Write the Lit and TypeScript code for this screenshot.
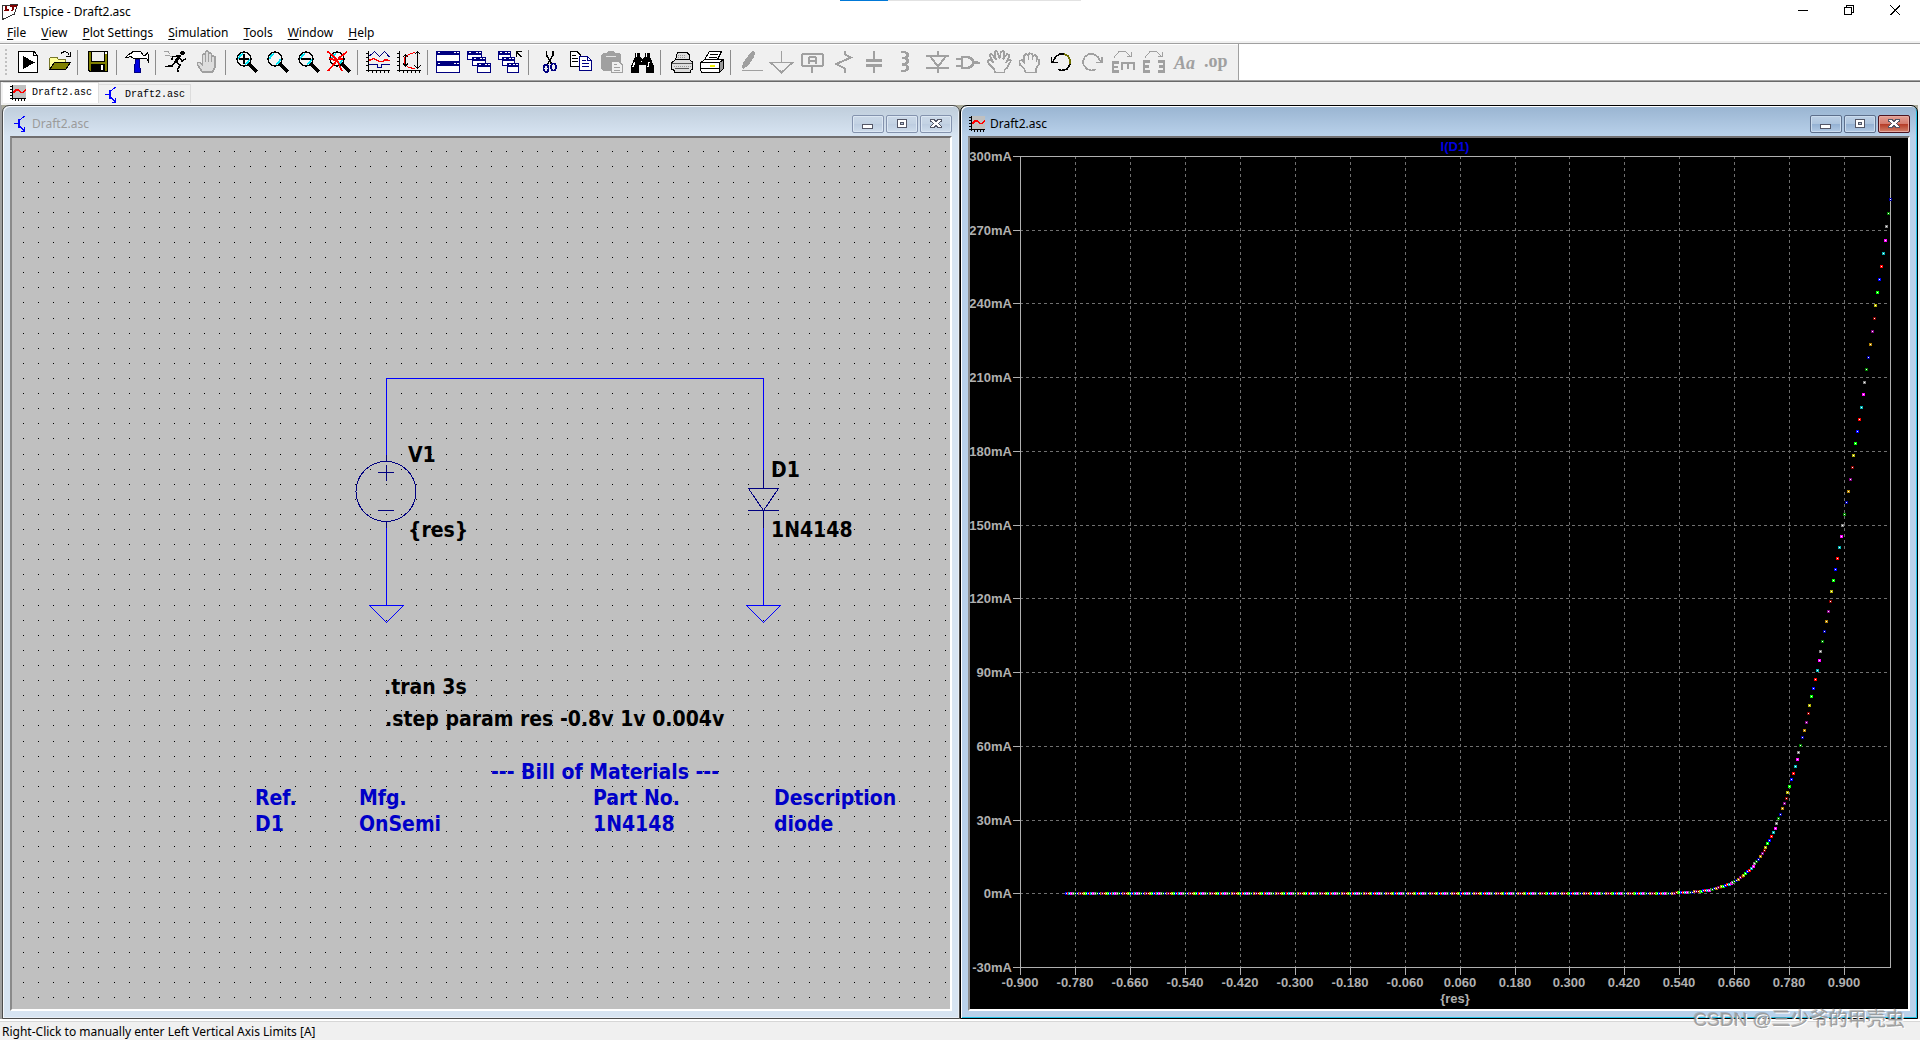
import { LitElement, html, css, svg, nothing } from "lit";
import type { TemplateResult } from "lit";
import { customElement, property, state } from "lit/decorators.js";
import { classMap } from "lit/directives/class-map.js";

const G = "#a0a0a0";
const NAVY = "#000080";

const lens = svg`
  <circle cx="10" cy="9" r="7" fill="#f4f4f4" stroke="#000" stroke-width="1.4"/>
  <path d="M5 9C5 6 7 4.5 9 4M11 14C13 13.500 15 12 15 9" fill="none" stroke="#00e5f5" stroke-width="1.6"/>
  <path d="M15 14L23 22" stroke="#000" stroke-width="3.2" fill="none"/>`;

const axes = svg`
  <path d="M2.500 1V22M0 20.500H24M0 3.500H2M0 7.500H2M0 11.500H2M0 15.500H2M6.500 21V23M10.500 21V23M14.500 21V23M18.500 21V23M22.500 21V23" stroke="#000" fill="none"/>`;

const win = (x: number, y: number, w: number, h: number) => svg`
  <rect x=${x + 0.5} y=${y + 0.5} width=${w - 1} height=${h - 1} fill="#fff" stroke=${NAVY}/>
  <rect x=${x} y=${y} width=${w} height="4" fill=${NAVY}/>
  <path d="M${x + 2} ${y + 1.5}h2M${x + w - 6} ${y + 1.5}h2M${x + w - 3} ${y + 1.5}h2" stroke="#fff"/>`;

const ICONS: Record<string, TemplateResult> = {
  run: svg`<path d="M2.500 1.500H18L21.500 5.500V22.500H2.500Z" fill="#fff" stroke="#000"/><path d="M17.500 1.500V5.500H21.500" fill="none" stroke="#000"/><path d="M7 6L19 12.500L7 19Z"/>`,
  open: svg`<path d="M2.500 19V8.500L4 7H9.500L11 9H18V12" fill="#ffff9a" stroke="#77772a"/><path d="M2.500 19.500L7.500 12.500H23.500L18.500 19.500Z" fill="#808000" stroke="#000"/><path d="M13.500 4.500L15 2.500L18 1.500L20.500 2.500L22.500 5.500M23.500 2V6.500H19" fill="none" stroke="#000"/>`,
  save: svg`<path d="M2.500 1.500H21.500V21.500H4L2.500 20Z" fill="#808000" stroke="#000"/><rect x="5" y="1" width="14" height="11"/><rect x="6" y="2" width="12" height="9" fill="#f0f0f0"/><rect x="5" y="14" width="14" height="8"/><rect x="15" y="15" width="2" height="5" fill="#fff"/><rect x="19" y="2" width="2" height="2" fill="#fff"/>`,
  hammer: svg`<path d="M.5 7.500L3.500 4.500L7.500 2.500V1.500H15.500L18 5L20.500 5L22.500 3L23.500 5V12.500L22 9L16.500 8.500H8.500L6 6.500L1 8Z" fill="#fff" stroke="#000"/><path d="M10 9.500H14.500L14.500 14L15.500 22.500H9.500L10 14Z" fill="#0000e0" stroke=${NAVY}/>`,
  runner: svg`<circle cx="18.500" cy="3" r="2.400"/><path d="M16 5L11 13" stroke="#000" stroke-width="3" fill="none"/><path d="M15 6L9 6.500L7.500 10.500M15.500 8L18 11L22 8.500M11 12.500L8 16L1 16.500M11.500 12L16.500 15L13.500 19L14.500 22.500" stroke="#000" stroke-width="1.500" fill="none"/><path d="M0 1.500L4 1.500L6 4M1 5.500H5.500L7.500 7" stroke="#a0a0a0" fill="none"/>`,
  halt: svg`<path d="M7.500 22L2.500 15L2.500 12.500L5 12.500L7.500 15V4.500L9 3.500L10.500 4.500V2L12 1L13.500 2V3L15 2.500L16.500 3.500V6L18 5.500L20 7V17L17.500 22Z" fill="#ddd" stroke=${G} stroke-width="1.600"/><path d="M10.500 4V12M13.500 3V12M16.500 5V12" stroke=${G} stroke-width="1.500"/>`,
  zoomin: svg`${lens}<path d="M5 9H15M10 4V14" stroke="#000" stroke-width="2"/>`,
  zoompan: lens,
  zoomout: svg`${lens}<path d="M5 9H15" stroke="#000" stroke-width="2"/>`,
  zoomfit: svg`${lens}<path d="M.5 1.500L6 6L10 10L15 21M20 2L13 7L7 14L1 21M2 8L7 10L16 9" stroke="#f00" stroke-width="1.800" fill="none"/>`,
  auto: svg`<path d="M3.500 6L8.500 1.500L13.500 6.500L18.500 1.500L23.500 7M3 14.500H11V17.500H15.500V14.500H24" fill="none" stroke=${NAVY}/><path d="M3 10.500L8 8.500L13 11.500H17L19 10L24 10.500" fill="none" stroke="#f00" stroke-width="1.500"/>${axes}`,
  autoy: svg`${axes}<path d="M18 2L11 5L7.500 8V13L11 17L18 19" fill="none" stroke="#f00"/><path d="M8.500 4.500V16M6 7L8.500 4.500L11 7M6 13.500L8.500 16L11 13.500M20.500 1.500V18.500M17.500 4.500L20.500 1.500L23.500 4.500M17.500 15.500L20.500 18.500L23.500 15.500" fill="none" stroke="#000"/>`,
  tile: svg`${win(0, 1, 24, 11)}${win(0, 12, 24, 11)}`,
  cascade: svg`${win(0, 1, 15, 9)}${win(5, 7, 14, 9)}${win(10, 13, 14, 10)}`,
  closeall: svg`${win(0, 1, 13, 9)}${win(4, 7, 13, 9)}${win(9, 13, 12, 10)}<path d="M18.500 7V1.500H24M18.500 1.500L23.500 7" fill="none" stroke="#000" stroke-width="1.400"/>`,
  cut: svg`<path d="M9.500 1V5L14.500 14M16 1V5L10.500 14" stroke="#000" stroke-width="1.500" fill="none"/><ellipse cx="9" cy="18.500" rx="2.500" ry="3.500" fill="none" stroke=${NAVY} stroke-width="1.700"/><ellipse cx="16.500" cy="17" rx="2.500" ry="3.500" fill="none" stroke=${NAVY} stroke-width="1.700"/>`,
  copy: svg`<path d="M2.500 1.500H9L12.500 5V16.500H2.500Z" fill="#fff" stroke="#000"/><path d="M4 5.500H8M4 8.500H10M4 11.500H10" stroke="#000"/><path d="M11.500 6.500H19.500L23.500 10.500V20.500H11.500Z" fill="#fff" stroke=${NAVY}/><path d="M13.500 10.500H18M13.500 13.500H21M13.500 16.500H21M19.500 6.500V10.500H23.500" fill="none" stroke=${NAVY}/>`,
  paste: svg`<path d="M4 3H8L9 1H15L16 3H20L22 5V19L20 21H4L2 19V5Z" fill=${G}/><path d="M7 6.500H17" stroke="#e4e4e4" stroke-width="1"/><path d="M12.500 11.500H19.500L23.500 15V22.500H12.500Z" fill="#f0f0f0" stroke=${G}/><path d="M15 14.500H18M15 17.500H21M15 20.500H21" stroke=${G}/>`,
  find: svg`<path d="M5 3H10V7L12.500 9L15 7V3H20V7L24 16V22.500H16V15H9V22.500H1V16L5 7Z"/><path d="M6.500 3V7M16.500 3V7M4.500 12L3 17M11.500 10.500V12M19 12L18 17" stroke="#fff" stroke-width="1.500"/>`,
  psetup: svg`<path d="M6.500 10L8.500 2.500H18L20 4.500V10" fill="#ddd" stroke="#000"/><path d="M2.500 13L6.500 9.500H20.500L23.500 12V19L21 20.500V22.500H5.500V20.500L2.500 19Z" fill="#ddd" stroke="#000"/><path d="M3 13.500H23M6 18.500H20" stroke="#555"/><path d="M9 5.500H17M9 7.500H17M5 16H22" stroke="#999" stroke-dasharray="1 1"/>`,
  print: svg`<path d="M4.500 9.500L9.500 1.500H21.500L17.500 9.500Z" fill="#fff" stroke="#000"/><path d="M10 4.500H18M9 7H17" stroke="#000"/><path d="M.5 12.500L5 9.500H23.500L19.500 12.500Z" fill="#fff" stroke="#000"/><path d="M19.500 12.500L23.500 9.500V18.500L19.500 22.500Z" fill="#999" stroke="#000"/><path d="M.5 12.500H19.500V22.500H2L.5 20.500Z" fill="#fff" stroke="#000"/><path d="M1 18.500H19" stroke="#000"/><path d="M10 15.500H15" stroke="#ee0" stroke-width="2"/>`,
  wire: svg`<path d="M11 3L14 1L16 3L15 7L9 16L4 19L3 18L4 13Z" fill=${G}/><path d="M3 20.500H24" stroke=${G}/>`,
  ground: svg`<path d="M11.500 1V12M.5 12.500H22.500L11.500 22.500Z" fill="none" stroke=${G} stroke-width="1.700"/>`,
  label: svg`<rect x="1" y="4" width="21" height="12" rx="2" fill="none" stroke=${G} stroke-width="2"/><path d="M8 14V8L9.500 7H13.500L15 8V14M8 11H15" stroke=${G} stroke-width="2" fill="none"/><path d="M11 17V23" stroke=${G} stroke-width="2"/>`,
  res: svg`<path d="M13 1V4.500L19 7.500L4 14L13 18.500V23" fill="none" stroke=${G} stroke-width="2"/>`,
  cap: svg`<path d="M11 1V10M11 16V23" stroke=${G} stroke-width="2"/><path d="M3 10.500H19M3 15.500H19" stroke=${G} stroke-width="3"/>`,
  ind: svg`<path d="M7 2H11L13.500 4V6L11 8H8M11 8L13.500 10V12L11 14.500H8M11 14.500L13.500 16.500V19L11 21H7" fill="none" stroke=${G} stroke-width="2.400"/>`,
  diode: svg`<path d="M13 1V6M1 6H24M5 6L13 16.500L21 6M1 18H24M13 17V23" fill="none" stroke=${G} stroke-width="2"/>`,
  gate: svg`<path d="M6 7H12L16 9L17.500 12.500L16 16L12 18H6Z" fill="none" stroke=${G} stroke-width="2.400"/><path d="M0 9H5M0 16H5M18 12.500H24" stroke=${G} stroke-width="2"/><rect x="18" y="11" width="4" height="3" fill=${G}/>`,
  move: svg`<path d="M8 22.500L7 19L2 14L.5 10.500L3 10L6.500 12.500L2.500 5.500L4 4L5.500 5L9 10L7.500 2.500L9 1L10.500 2L12.500 9L14 2L16 1L17.500 2.500L16 9.500L20 4L22 4.500V7L19 13L22 9.500L24 10.500L20 18L17.500 20V22.500Z" fill="none" stroke=${G} stroke-width="1.600"/>`,
  drag: svg`<path d="M7.500 22.500L6 18.500L2 15L1.500 11L4 10L6 12V6L8 4L10 5.500L11.500 3L14 4L15 6L17 5L19 7V9L21 9.500V14L18 18.500V22.500Z" fill="none" stroke=${G} stroke-width="1.600"/><path d="M6.500 12V14M10.500 6V10M14.500 6V10M18 9V12" stroke=${G}/>`,
  undo: svg`<path d="M3.500 12L7 6.500L11 4L15 4" stroke="#000" stroke-width="1.500" fill="none"/><path d="M15 4L19 6L21.500 10.500L21 15" stroke="#707000" stroke-width="1.800" fill="none"/><path d="M21.500 14L18 19L13 20.500L9 19.500M2.500 6.500V12.500H9" stroke="#000" stroke-width="1.600" fill="none"/>`,
  redo: svg`<path d="M21 12L17.500 6.500L13.500 4H9L5 6.500L3 11L3.500 15L7 19L11 20.500L16 19.500M22 6.500V12.500H15.500" stroke=${G} stroke-width="1.700" fill="none"/>`,
  rotate: svg`<path d="M3 7.500L8 1.500H14.500L19 6M20.500 2V6.500H15.500" stroke=${G} fill="none"/><path d="M8 12.500H2V21.500H8M2 17H7" stroke=${G} stroke-width="2.800" fill="none"/><path d="M11 20V13H23V20M17 13V19" stroke=${G} stroke-width="2.800" fill="none"/>`,
  mirror: svg`<path d="M3 7.500L8 1.500H14.500L19 6M20.500 2V6.500H15.500" stroke=${G} fill="none"/><path d="M8 11.500H2V21.500H8M2 16.500H7M16 11.500H22V21.500H16M17 16.500H22" stroke=${G} stroke-width="2.800" fill="none"/>`,
  text: svg`<text x="1" y="19" class="serif italic">Aa</text>`,
  op: svg`<text x="0" y="17" class="serif">.op</text>`,
};

const TOOLS: Array<Array<[string, string, boolean?]>> = [
  [["run", "Run"], ["open", "Open"]],
  [["save", "Save"]],
  [["hammer", "Control Panel"]],
  [["runner", "Run simulation"], ["halt", "Halt", true]],
  [["zoomin", "Zoom to rectangle"], ["zoompan", "Pan"], ["zoomout", "Zoom back"], ["zoomfit", "Zoom full extents"]],
  [["auto", "Autorange"], ["autoy", "Autorange Y axis"]],
  [["tile", "Tile windows"], ["cascade", "Cascade windows"], ["closeall", "Close all windows"]],
  [["cut", "Cut"], ["copy", "Copy"], ["paste", "Paste", true], ["find", "Find"]],
  [["psetup", "Print setup"], ["print", "Print"]],
  [["wire", "Wire", true], ["ground", "Ground", true], ["label", "Label net", true], ["res", "Resistor", true],
   ["cap", "Capacitor", true], ["ind", "Inductor", true], ["diode", "Diode", true], ["gate", "Component", true],
   ["move", "Move", true], ["drag", "Drag", true], ["undo", "Undo"], ["redo", "Redo", true],
   ["rotate", "Rotate", true], ["mirror", "Mirror", true], ["text", "Text", true], ["op", "SPICE directive", true]],
];

const chartIcon = svg`<rect x="2" width="14" height="13" fill="#c0c0c0"/><path d="M2.500 0V15M0 13.500H16M0 1.500H2M0 4.500H2M0 7.500H2M0 10.500H2M5.500 14V16M8.500 14V16M11.500 14V16M14.500 14V16" stroke="#000" fill="none"/><path d="M3 8L6 5L8 5L11 7.500H13L16 4.500" stroke="#f00" stroke-width="1.500" fill="none"/>`;
const deviceIcon = svg`<path d="M0 7.500H4M10.500 0L4.500 5.500M4.500 9L10 14.500M10.500 11V15H7" stroke="#00f" fill="none"/><path d="M4.500 2.500V12" stroke="#00f" stroke-width="2"/>`;

@customElement("lt-schematic")
export class LtSchematic extends LitElement {
  static styles = css`
    :host { display: block; position: relative; overflow: hidden; background: #c0c0c0; }
    svg { position: absolute; inset: 0; width: 100%; height: 100%; shape-rendering: crispEdges; }
    text, table { font: bold 21px/26px "DejaVu Sans Condensed", "Noto Sans", sans-serif; }
    .wire { stroke: #00f; fill: none; }
    .part { stroke: #000080; fill: none; }
    table { position: absolute; left: 243px; top: 621px; border-collapse: collapse; color: #0000c8; white-space: nowrap; }
    caption { text-align: left; padding-left: 236px; }
    th, td { padding: 0; text-align: left; }
    .c1 { width: 104px; }
    .c2 { width: 234px; }
    .c3 { width: 181px; }
  `;
  render() {
    const pitch = 15.11;
    let dots = "";
    for (let j = 0; j < 70; j++)
      for (let i = 0; i < 130; i++)
        dots += `M${Math.floor(11.4 + i * pitch)} ${Math.floor(13.8 + j * pitch)}h1v1h-1z`;
    return html`
      <svg role="img" aria-label="Schematic">
        <path d=${dots}/>
        <path class="wire" d="M374.500 317V240.500H751.500V332M374.500 390V467M751.500 390V467M357.500 467.500H391.500L374.500 484.500ZM734.500 467.500H768.500L751.500 484.500Z"/>
        <path class="part" d="M374.500 317V323M374.500 383V390M366 334.500H382M374.500 327V343M366 372.500H382M751.500 332V350M736.500 350.500H766.500L751.500 372.500ZM736 372.500H767M751.500 372V390"/>
        <circle class="part" cx="374" cy="353.500" r="30"/>
        <text x="396" y="324">V1</text>
        <text x="396" y="399">{res}</text>
        <text x="759" y="339">D1</text>
        <text x="759" y="399">1N4148</text>
        <text x="372" y="556">.tran 3s</text>
        <text x="373" y="588">.step param res -0.8v 1v 0.004v</text>
      </svg>
      <table>
        <caption>--- Bill of Materials ---</caption>
        <thead><tr><th class="c1">Ref.</th><th class="c2">Mfg.</th><th class="c3">Part No.</th><th>Description</th></tr></thead>
        <tbody><tr><td>D1</td><td>OnSemi</td><td>1N4148</td><td>diode</td></tr></tbody>
      </table>`;
  }
}

const TRACE = ["#0000ff", "#ff0000", "#00b0b0", "#ff00ff", "#808080", "#008000", "#0000a0", "#b08000", "#800080", "#800000", "#b0b000", "#00ff00"];

/** Diode current in mA for a forward voltage, with series resistance. */
function current(v: number): number {
  const is = 2.52e-9, nvt = 0.0453, rs = 0.568;
  if (v <= 0) return 0;
  let lo = 0, hi = 1;
  for (let k = 0; k < 50; k++) {
    const mid = (lo + hi) / 2;
    if (nvt * Math.log(mid / is + 1) + mid * rs > v) hi = mid;
    else lo = mid;
  }
  return lo * 1000;
}

@customElement("lt-plot")
export class LtPlot extends LitElement {
  static styles = css`
    :host { display: block; position: relative; overflow: hidden; background: #000; }
    svg { position: absolute; inset: 0; width: 100%; height: 100%; shape-rendering: crispEdges; }
    text { font: bold 13px "Liberation Sans", Arial, sans-serif; fill: #b0b0b0; text-anchor: middle; }
    .end { text-anchor: end; }
    .name { fill: #0000e0; }
    .axis { stroke: #b0b0b0; fill: none; }
    .grid { stroke: #707070; stroke-dasharray: 3 3; fill: none; }
  `;
  @state() private w = 938;
  @state() private h = 871;
  private observer?: ResizeObserver;

  connectedCallback() {
    super.connectedCallback();
    this.observer = new ResizeObserver(() => {
      this.w = this.clientWidth;
      this.h = this.clientHeight;
    });
    this.observer.observe(this);
  }
  disconnectedCallback() {
    this.observer?.disconnect();
    super.disconnectedCallback();
  }
  render() {
    const l = 50, t = 18, r = this.w - 18, b = this.h - 42;
    const px = (v: number) => Math.round(l + ((v + 0.9) / 1.9) * (r - l));
    const py = (i: number) => Math.round(b - ((i + 30) / 330) * (b - t));
    const xs = Array.from({ length: 16 }, (_, k) => -0.9 + k * 0.12 + 1e-6);
    const ys = Array.from({ length: 12 }, (_, k) => -30 + k * 30);
    const mid = Math.round((l + r) / 2);
    return html`<svg role="img" aria-label="Diode current against voltage">
      ${xs.slice(1).map((v) => svg`<path class="grid" d="M${px(v) + 0.5} ${t}V${b}"/>`)}
      ${ys.slice(1, -1).map((i) => svg`<path class="grid" d="M${l} ${py(i) + 0.5}H${r - 2}"/>`)}
      <rect class="axis" x=${l + 0.5} y=${t + 0.5} width=${r - l} height=${b - t}></rect>
      ${xs.map((v) => svg`<path class="axis" d="M${px(v) + 0.5} ${b}v8"/><text x=${px(v)} y=${b + 20}>${v.toFixed(3)}</text>`)}
      ${ys.map((i) => svg`<path class="axis" d="M${l} ${py(i) + 0.5}h-7"/><text class="end" x=${l - 8} y=${py(i) + 5}>${i}mA</text>`)}
      ${Array.from({ length: 451 }, (_, k) => {
        const v = -0.8 + k * 0.004;
        const x = px(v + 1e-6), y = py(current(v));
        return svg`<rect x=${x - 1} y=${y - 1} width="3" height="3" fill=${TRACE[k % 12]}/><rect x=${x} y=${y} width="1" height="1" fill="#fff"/>`;
      })}
      <text class="name" x=${mid} y="13">I(D1)</text>
      <text x=${mid} y=${this.h - 6}>{res}</text>
    </svg>`;
  }
}

@customElement("lt-window")
export class LtWindow extends LitElement {
  static styles = css`
    :host { display: flex; min-width: 0; }
    .frame { flex: 1; min-width: 0; display: flex; flex-direction: column; padding: 1px 7px 7px; border: 1px solid #4c4c4c; border-radius: 7px 7px 0 0;
      background: linear-gradient(#bfcddb, #d7e4f2 30px); box-shadow: inset 1px 1px #f4f8fc, inset -1px -1px #e8eef6; }
    .active { border-color: #000; background: linear-gradient(#99b4d1, #b9d1ea 30px); box-shadow: inset 1px 1px #fff, inset -1px -1px #22c3e6; }
    .bar { box-sizing: border-box; display: flex; align-items: center; height: 29px; padding-top: 4px; color: #9b9b9b; font: 12px/16px "Noto Sans", sans-serif; }
    .active .bar { color: #000; }
    .bar svg { width: 16px; height: 16px; margin: 0 5px 0 1px; shape-rendering: crispEdges; }
    .name { flex: 1; }
    .buttons { display: flex; gap: 2px; }
    button { display: grid; place-items: center; width: 32px; height: 18px; padding: 0; border: 1px solid #8493ae; border-radius: 2px; background: linear-gradient(#cbd9e8, #c3d2e3 50%, #bccce0 50%, #cfddec); box-shadow: inset 0 0 0 1px #dce7f3; }
    .active button { border-color: #5d6f8c; background: linear-gradient(#bdd0e6, #adc4de 50%, #93b0d2 50%, #b2cae5); box-shadow: inset 0 0 0 1px #cbdcee; }
    .active .close { border-color: #4d1420; background: linear-gradient(#e4a095, #d3796b 50%, #b53a25 50%, #d0806a); box-shadow: inset 0 0 0 1px #e6aaa0; }
    .bar button svg { width: 14px; height: 12px; margin: 0; }
    .client { flex: 1; display: grid; border: 2px solid; border-color: #716f70 #fff #fff #8a8a8a; }
  `;
  @property() label = "";
  @property() kind = "device";
  @property({ type: Boolean }) active = false;
  render() {
    return html`<section class=${classMap({ frame: true, active: this.active })}>
      <header class="bar">
        <svg viewBox="0 0 16 16" aria-hidden="true">${this.kind === "chart" ? chartIcon : svg`<g transform="translate(3)">${deviceIcon}</g>`}</svg>
        <span class="name">${this.label}</span>
        <div class="buttons">
          <button aria-label="Minimize"><svg viewBox="0 0 14 12"><rect x="1.500" y="6.500" width="10" height="4" rx="1" fill="#fff" stroke="#535666"/></svg></button>
          <button aria-label="Maximize"><svg viewBox="0 0 14 12"><rect x="2.500" y="1.500" width="9" height="8" fill="#fff" stroke="#535666"/><rect x="5.500" y="4.500" width="3" height="2" fill="#b5c5d8" stroke="#535666"/></svg></button>
          <button class="close" aria-label="Close"><svg viewBox="0 0 14 12"><path d="M1.500 1.500H5L7 3.500L9 1.500H12.500V3L9.500 5.500L12.500 8.500V9.500H9L7 7.500L5 9.500H1.500V8.500L4.500 5.500L1.500 3Z" fill="#fff" stroke="#535666"/></svg></button>
        </div>
      </header>
      <div class="client"><slot></slot></div>
    </section>`;
  }
}

@customElement("app-root")
export class AppRoot extends LitElement {
  static styles = css`
    :host { display: flex; flex-direction: column; min-height: 100vh; position: relative; background: #f0f0f0; color: #000; font: 12px/16px "Noto Sans", sans-serif; }
    * { box-sizing: border-box; }
    svg { display: block; shape-rendering: crispEdges; }
    button { font: inherit; color: inherit; border: 0; background: none; padding: 0; }
    .progress { position: absolute; top: 0; left: 0; right: 0; width: 241px; height: 1px; margin: 0 auto; background: #e2e2e2; }
    .progress i { display: block; width: 48px; height: 1px; background: #0078d7; }
    .title { display: flex; align-items: center; height: 23px; background: #fff; padding: 0 2px; }
    .title .name { flex: 1; margin-left: 5px; }
    .sys { display: grid; place-items: center; width: 46px; height: 20px; margin-bottom: 3px; }
    .menu { display: flex; gap: 15px; height: 20px; padding: 1px 7px 0; background: #fff; border-bottom: 2px solid #f0f0f0; }
    .menu button { line-height: 16px; height: 18px; }
    .menu u { text-underline-offset: 2px; }
    .toolrow { display: flex; height: 39px; background: #fff; border-top: 1px solid #a0a0a0; border-bottom: 1px solid #696969; box-shadow: inset 0 -1px #a0a0a0; }
    .tools { display: flex; align-items: center; padding: 0 6px 1px 5px; background: #f0f0f0; border-right: 1px solid #a0a0a0; box-shadow: inset 0 1px #fff, inset 0 -1px #a0a0a0; }
    .grip { width: 2px; height: 27px; margin-right: 6px; background: repeating-linear-gradient(#c0c0c0 0 2px, transparent 2px 4px); }
    .tool { width: 31px; height: 24px; padding: 0 4px 0 3px; }
    .tool svg { width: 24px; height: 24px; overflow: visible; }
    .sep { width: 8px; height: 25px; padding-left: 2px; }
    .sep::before { content: ""; display: block; width: 1px; height: 25px; background: #8c8c8c; }
    .serif { font: bold 18px "Liberation Serif", serif; fill: #a0a0a0; }
    .italic { font-style: italic; }
    .tabs { display: flex; height: 23px; padding: 0 0 2px 2px; border-left: 1px solid #a0a0a0; align-items: flex-end; }
    .tab { display: flex; align-items: center; gap: 4px; height: 19px; padding: 2px 5px 0 6px; border: 1px solid #dcdcdc; border-width: 1px 1px 0 0; font: 10px/16px "Liberation Mono", monospace; }
    .tab.on { height: 21px; gap: 6px; background: #fff; padding: 0 6px 0 7px; }
    .tab svg { width: 16px; height: 16px; }
    .mdi { flex: 1; display: grid; grid-template-columns: 1fr 1fr; padding: 0 2px; background: linear-gradient(90deg, #a0a0a0 2px, #abab9b 2px calc(100% - 2px), #f0f0f0 0); }
    .status { height: 21px; padding: 0 2px; background: #f0f0f0; border-top: 2px solid #fff; box-shadow: inset 0 1px #d7d7d7; line-height: 22px; }
    .mark { position: absolute; right: 15px; bottom: 5px; font: 19px/30px "Liberation Sans", "Noto Sans CJK SC", sans-serif; color: rgba(150, 150, 150, 0.9); text-shadow: 1px 1px #fff, -1px -1px rgba(120, 120, 120, 0.4); }
  `;
  private menu = ["File", "View", "Plot Settings", "Simulation", "Tools", "Window", "Help"];
  render() {
    return html`
      <div class="progress"><i></i></div>
      <header class="title">
        <svg width="16" height="16" viewBox="0 0 16 16" aria-hidden="true"><path d="M.5 1.500L15.500 .5L12.500 10L.5 15.500Z" fill="#fff" stroke="#333"/><path d="M4 2L3.500 6H7M8 2L15 1.500M12 2L10 7" stroke="#800000" stroke-width="2" fill="none"/></svg>
        <span class="name">LTspice - Draft2.asc</span>
        <button class="sys" aria-label="Minimize"><svg width="11" height="11"><path d="M0 5.500H10" stroke="#000"/></svg></button>
        <button class="sys" aria-label="Restore"><svg width="11" height="11"><path d="M.5 2.500H7.500V9.500H.5ZM2.500 2.500V.5H9.500V7.500H7.500" fill="none" stroke="#000"/></svg></button>
        <button class="sys" aria-label="Close"><svg width="11" height="11"><path d="M.5 .5L10 10M10 .5L.5 10" stroke="#000"/></svg></button>
      </header>
      <nav class="menu">${this.menu.map((m) => html`<button><u>${m[0]}</u>${m.slice(1)}</button>`)}</nav>
      <div class="toolrow">
        <div class="tools" role="toolbar">
          <span class="grip"></span>
          ${TOOLS.map((group, g) => html`${g ? html`<span class="sep"></span>` : nothing}${group.map(
            ([id, label, off]) => html`<button class="tool" aria-label=${label} ?disabled=${!!off}><svg viewBox="0 0 24 24">${ICONS[id]}</svg></button>`)}`)}
        </div>
      </div>
      <div class="tabs">
        <button class="tab on"><svg viewBox="0 0 16 16">${chartIcon}</svg>Draft2.asc</button>
        <button class="tab"><svg viewBox="0 0 16 16">${deviceIcon}</svg>Draft2.asc</button>
      </div>
      <main class="mdi">
        <lt-window label="Draft2.asc"><lt-schematic></lt-schematic></lt-window>
        <lt-window label="Draft2.asc" kind="chart" active><lt-plot></lt-plot></lt-window>
      </main>
      <footer class="status">Right-Click to manually enter Left Vertical Axis Limits [A]</footer>
      <div class="mark">CSDN @三少爷的甲壳虫</div>`;
  }
}
